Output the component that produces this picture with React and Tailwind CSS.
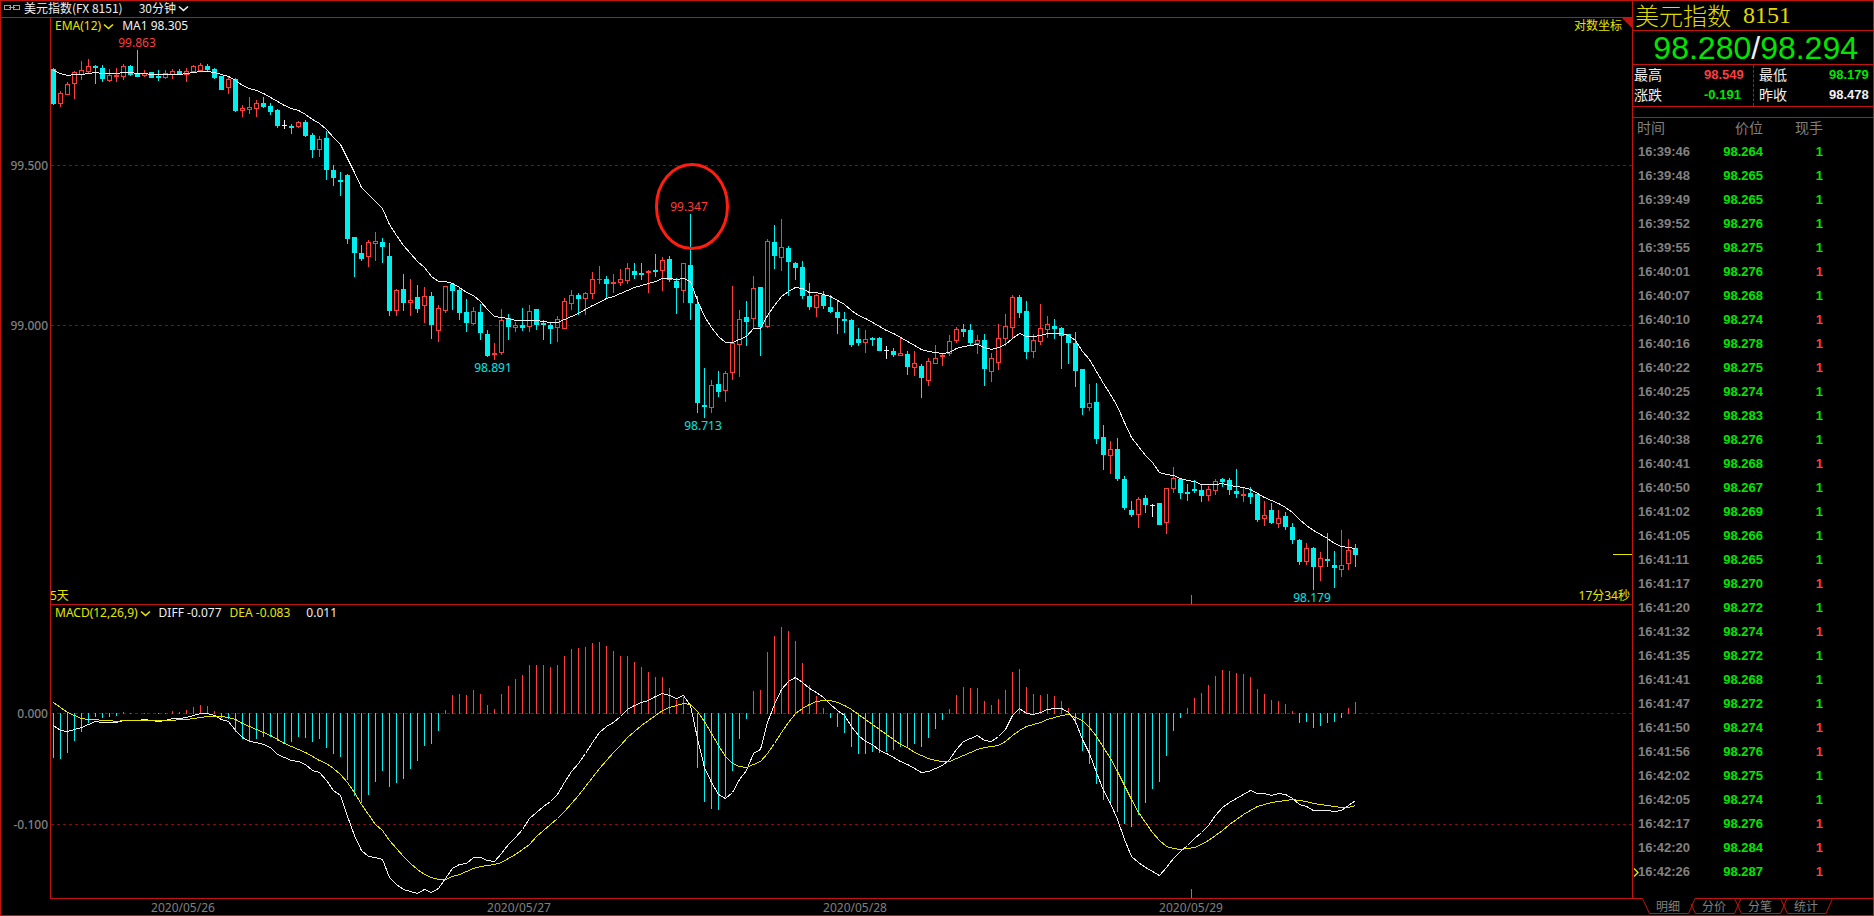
import React from 'react';
import clsx from 'clsx';

const BAR_STEP = 7;
const FIRST_BAR = 53;

// kind, high, body top, body bottom, low (U = up, D = down, F = flat)
const CANDLES = `
D 68 69 104 105|U 91 93 104 107|U 82 84 95 95|U 71 72 84 99|U 61 70 75 80|U 59 66 72 73|D 65 66 68 84|D 65 68 79 82|U 69 75 81 82|U 68 75 77 82
U 64 66 77 80|D 65 66 75 76|D 50 73 77 77|U 70 73 76 77|D 72 72 78 78|D 70 76 78 81|U 70 73 78 79|U 69 71 75 79|D 69 71 75 75|U 68 71 75 82
U 65 66 72 73|U 63 65 71 71|D 64 66 70 71|D 68 69 78 79|D 76 76 90 90|U 77 79 88 94|D 78 79 111 112|U 105 108 111 117|U 97 107 110 114|U 100 103 109 117
D 97 103 107 108|D 103 106 112 115|D 109 110 126 128|F 120 125 126 129|D 124 126 128 134|U 121 122 127 128|D 120 122 136 137|D 133 135 150 158|U 136 139 150 157|D 131 138 170 180
D 165 170 178 186|D 172 180 182 196|D 174 175 239 244|D 237 237 253 277|D 245 253 259 261|U 240 242 257 267|U 232 241 244 261|D 238 242 247 263|D 243 256 311 316|U 289 290 311 316
D 274 289 303 311|U 279 300 303 316|D 285 297 309 313|U 287 296 306 323|D 292 296 325 339|U 305 308 331 342|U 286 286 311 313|D 283 284 291 310|D 288 290 313 320|D 299 312 323 332
U 307 311 324 325|D 304 312 333 340|D 330 334 356 357|U 343 353 355 360|U 309 320 353 355|D 314 318 327 340|U 322 325 328 332|D 308 325 328 331|U 305 311 327 332|D 309 309 325 330
D 320 323 325 340|D 323 325 329 344|U 316 319 328 342|U 298 301 329 329|U 290 295 304 310|D 293 295 299 315|U 292 293 299 315|U 272 279 294 299|U 266 279 280 284|D 276 279 284 298
U 274 282 284 293|U 269 279 283 286|U 263 268 281 284|D 263 271 275 279|D 263 273 275 280|U 270 271 273 293|D 254 270 272 277|U 257 260 271 291|D 256 259 280 282|D 278 281 288 314
U 263 263 291 303|D 214 265 303 320|D 296 304 403 413|D 368 405 407 418|U 380 385 408 413|D 371 384 392 397|U 371 373 391 402|U 286 343 373 380|U 310 319 345 377|D 301 317 322 346
U 276 288 319 328|D 287 287 327 356|U 239 241 327 328|D 225 242 256 269|U 219 247 258 271|D 246 248 262 296|D 262 263 268 280|D 261 267 296 299|D 283 296 307 310|U 294 295 308 317
D 291 295 306 309|D 295 307 312 313|D 300 312 318 334|D 312 319 321 333|D 319 320 345 347|D 328 339 343 346|U 330 339 343 353|D 337 338 340 346|D 337 338 351 351|F 346 350 351 359
D 348 351 355 357|U 337 353 356 356|D 351 354 367 375|U 351 363 368 376|D 364 366 378 398|U 358 361 381 386|U 345 358 364 364|U 353 355 357 366|U 335 341 354 356|U 327 329 341 343
D 324 329 332 337|D 324 330 343 346|U 335 340 344 354|D 334 340 369 386|U 353 358 372 382|U 324 338 363 370|U 314 326 339 346|U 295 297 328 339|D 295 297 313 318|D 301 311 352 359
U 334 340 352 358|U 304 328 342 345|U 316 324 330 338|D 319 326 329 339|D 327 328 336 369|D 334 334 343 364|D 332 343 371 387|D 369 369 408 415|U 384 403 408 411|D 383 402 439 444
D 425 437 455 470|U 441 449 456 474|D 438 449 479 481|D 476 479 508 510|D 501 510 515 517|U 497 499 515 528|D 495 498 505 513|F 504 505 506 517|D 503 503 525 525|U 488 488 523 534
U 467 478 489 493|D 478 479 493 499|D 484 492 494 501|D 480 489 491 493|D 484 490 496 502|U 486 489 496 501|U 479 481 491 495|D 478 479 482 487|D 478 480 490 495|D 469 491 494 498
U 488 494 496 502|D 487 493 497 504|D 493 494 520 522|U 501 515 519 526|D 503 510 523 524|U 510 518 524 528|D 512 516 527 530|D 523 527 540 544|D 539 540 562 565|U 543 548 562 565
D 547 548 567 590|U 552 558 567 581|D 533 559 561 567|D 551 565 568 588|U 530 565 570 577|U 539 550 564 570|D 544 548 555 567`
    .trim()
    .split(/[|\n]/)
    .map((row) => {
        const [kind, ...levels] = row.split(' ');
        return [kind, ...levels.map(Number)];
    });

const EMA = [
    70, 73, 75, 74, 74, 73, 72, 73, 73, 73, 72, 72, 73, 73, 74, 74, 74, 74, 74, 73,
    72, 71, 71, 72, 74, 76, 80, 85, 88, 90, 93, 97, 101, 105, 108, 110, 114, 119, 123, 129,
    137, 144, 158, 172, 187, 194, 201, 208, 224, 235, 245, 253, 261, 267, 276, 281, 281, 283, 287, 292,
    295, 301, 309, 316, 317, 318, 320, 320, 320, 320, 321, 322, 322, 319, 316, 313, 309, 305, 302, 298,
    296, 293, 290, 287, 285, 283, 281, 278, 278, 279, 278, 281, 300, 316, 327, 336, 342, 342, 339, 336,
    328, 328, 315, 305, 296, 291, 287, 288, 292, 292, 294, 296, 300, 304, 310, 315, 318, 322, 326, 330,
    333, 337, 341, 345, 349, 351, 352, 353, 352, 348, 346, 345, 344, 347, 349, 347, 344, 338, 333, 336,
    336, 335, 333, 333, 333, 335, 340, 351, 359, 371, 383, 394, 406, 422, 437, 446, 455, 462, 472, 474,
    475, 478, 480, 481, 484, 484, 484, 483, 485, 486, 487, 489, 493, 497, 500, 503, 507, 512, 519, 525,
    530, 534, 538, 543, 546, 547, 548,
];

// histogram tips, 713 is the zero line and null is an empty slot
const ZERO = 713;
const MACD = [
    758, 759, 753, 741, 732, 723, 717, 718, 717, 716, 712, 713, null, 713, null, 714, 713, 711, 712, 710,
    707, 705, 706, 711, 718, 719, 732, 739, 741, 739, 737, 737, 741, 743, 742, 737, 738, 742, 739, 748,
    754, 757, 780, 796, 803, 795, 782, 771, 787, 783, 779, 769, 761, 746, 744, 731, 710, 695, 694, 695,
    690, 694, 705, 709, 694, 686, 679, 675, 665, 665, 665, 667, 665, 656, 649, 648, 647, 643, 642, 646,
    651, 656, 656, 662, 667, 672, 677, 677, 688, 700, 697, null, 768, 802, 809, 810, 797, 771, 739, 719,
    691, 690, 652, 636, 627, 631, 641, 663, 685, 696, 708, 718, 727, 733, 747, 754, 754, 752, 753, 752,
    750, 747, 747, 744, 747, 738, 729, 720, 709, 695, 687, 688, 688, 701, 705, 699, 690, 672, 669, 687,
    694, 695, 694, 696, 701, 708, 724, 751, 764, 784, 800, 803, 812, 824, 827, 815, 803, 789, 782, 756,
    731, 718, 708, 698, 693, 685, 676, 670, 671, 673, 674, 677, 689, 694, 700, 701, 704, 711, 723, 722,
    728, 726, 723, 722, 718, 708, 702,
];

const DIFF = [
    725, 730, 731, 729, 727, 724, 721, 722, 722, 722, 720, 720, 720, 719, 720, 721, 720, 718, 718, 717,
    715, 713, 713, 715, 719, 721, 730, 737, 741, 742, 744, 747, 754, 757, 760, 761, 764, 770, 772, 780,
    790, 795, 816, 835, 850, 856, 857, 859, 877, 884, 889, 891, 893, 889, 892, 888, 878, 868, 864, 863,
    857, 857, 860, 861, 853, 844, 837, 829, 818, 812, 806, 801, 794, 782, 771, 763, 753, 742, 732, 726,
    722, 716, 709, 705, 702, 700, 696, 693, 695, 698, 695, 705, 738, 767, 782, 794, 798, 792, 779, 770,
    753, 749, 722, 704, 689, 681, 677, 682, 688, 692, 697, 704, 710, 715, 726, 735, 741, 744, 750, 753,
    757, 761, 764, 768, 772, 771, 768, 765, 759, 749, 741, 738, 735, 740, 741, 736, 729, 715, 708, 713,
    714, 712, 709, 708, 708, 712, 721, 739, 753, 772, 790, 803, 819, 839, 856, 862, 867, 871, 875, 867,
    858, 851, 845, 838, 832, 825, 815, 807, 802, 798, 794, 790, 793, 793, 795, 793, 794, 798, 804, 806,
    810, 810, 810, 811, 810, 805, 800,
];

const DEA = [
    702, 707, 712, 715, 718, 719, 719, 720, 720, 721, 720, 720, 720, 720, 720, 720, 720, 720, 719, 719,
    718, 717, 716, 716, 716, 717, 719, 723, 726, 729, 732, 735, 739, 743, 746, 749, 752, 756, 760, 763,
    768, 774, 782, 792, 804, 814, 824, 830, 840, 848, 856, 863, 869, 874, 877, 879, 879, 876, 874, 871,
    868, 866, 865, 864, 862, 858, 854, 849, 844, 836, 830, 824, 818, 811, 803, 795, 786, 777, 768, 760,
    752, 745, 737, 731, 725, 720, 715, 710, 707, 705, 703, 704, 711, 721, 733, 745, 756, 763, 766, 767,
    764, 761, 753, 743, 732, 722, 713, 708, 704, 701, 700, 700, 702, 705, 709, 714, 719, 724, 729, 734,
    739, 744, 747, 752, 755, 758, 760, 761, 761, 758, 755, 752, 749, 747, 746, 745, 741, 735, 730, 726,
    724, 722, 719, 717, 715, 714, 717, 720, 727, 736, 747, 758, 771, 785, 799, 812, 822, 832, 840, 846,
    848, 849, 848, 847, 844, 840, 835, 830, 824, 819, 814, 810, 806, 804, 802, 801, 800, 799, 800, 801,
    803, 804, 805, 806, 807, 807, 805,
];

const EXTREMES = [
    { x: 137, y: 47, label: '99.863', up: true },
    { x: 689, y: 211, label: '99.347', up: true },
    { x: 493, y: 372, label: '98.891' },
    { x: 703, y: 430, label: '98.713' },
    { x: 1312, y: 602, label: '98.179' },
];

const AXIS = [
    { y: 165, label: '99.500' },
    { y: 325, label: '99.000' },
    { y: 713, label: '0.000' },
    { y: 824, label: '-0.100' },
];

const DATES = ['2020/05/26', '2020/05/27', '2020/05/28', '2020/05/29'];

const TICKS = [
    ['16:39:46', '98.264'],
    ['16:39:48', '98.265'],
    ['16:39:49', '98.265'],
    ['16:39:52', '98.276'],
    ['16:39:55', '98.275'],
    ['16:40:01', '98.276', true],
    ['16:40:07', '98.268'],
    ['16:40:10', '98.274', true],
    ['16:40:16', '98.278', true],
    ['16:40:22', '98.275', true],
    ['16:40:25', '98.274'],
    ['16:40:32', '98.283'],
    ['16:40:38', '98.276'],
    ['16:40:41', '98.268', true],
    ['16:40:50', '98.267'],
    ['16:41:02', '98.269'],
    ['16:41:05', '98.266'],
    ['16:41:11', '98.265'],
    ['16:41:17', '98.270', true],
    ['16:41:20', '98.272'],
    ['16:41:32', '98.274', true],
    ['16:41:35', '98.272'],
    ['16:41:41', '98.268'],
    ['16:41:47', '98.272'],
    ['16:41:50', '98.274', true],
    ['16:41:56', '98.276', true],
    ['16:42:02', '98.275'],
    ['16:42:05', '98.274'],
    ['16:42:17', '98.276', true],
    ['16:42:20', '98.284', true],
    ['16:42:26', '98.287', true],
];

const TABS = ['明细', '分价', '分笔', '统计'];

const barX = (i) => FIRST_BAR + i * BAR_STEP;
const toPoints = (series) => series.map((y, i) => `${barX(i) + 0.5},${y + 0.5}`).join(' ');

const Chevron = ({ className }) => (
    <svg width="11" height="7" viewBox="0 0 11 7" className={className} aria-hidden="true">
        <path d="M1 1.5 L5.5 5.5 L10 1.5" fill="none" stroke="currentColor" strokeWidth="1.6" />
    </svg>
);

const GridLine = ({ y }) => (
    <line x1="0" x2="100%" y1={y + 0.5} y2={y + 0.5} stroke="#8c0a0a" strokeDasharray="3 3" />
);

const Candle = ({ x, candle }) => {
    const [kind, high, top, bottom, low] = candle;
    const color = { U: '#ff3c3c', D: '#00f0f0', F: '#f0f0f0' }[kind];
    const hollow = kind === 'U' && bottom - top > 2;
    return (
        <g fill={color}>
            {top > high && <rect x={x} y={high} width="1" height={top - high} />}
            {low > bottom && <rect x={x} y={bottom} width="1" height={low - bottom} />}
            {hollow ? (
                <rect x={x - 1.5} y={top + 0.5} width="4" height={bottom - top - 1} fill="none" stroke={color} />
            ) : (
                <rect x={x - 2} y={top} width="5" height={bottom - top} />
            )}
        </g>
    );
};

const PriceChart = () => (
    <svg
        className="block h-[568px] w-full overflow-visible"
        role="img"
        aria-label="美元指数 30分钟"
        shapeRendering="crispEdges"
    >
        <GridLine y={129} />
        <GridLine y={289} />
        <g transform="translate(-51 -36)">
            {CANDLES.map((candle, i) => (
                <Candle key={i} x={barX(i)} candle={candle} />
            ))}
            <polyline points={toPoints(EMA)} fill="none" stroke="#f0f0f0" />
            {EXTREMES.map(({ x, y, label, up }) => (
                <text key={label} x={x} y={y} textAnchor="middle" fontSize="12" fill={up ? '#ff3c3c' : '#00e6e6'}>
                    {label}
                </text>
            ))}
            <ellipse
                cx="692"
                cy="206.5"
                rx="35.5"
                ry="42"
                fill="none"
                stroke="#ff1e0f"
                strokeWidth="3"
                shapeRendering="geometricPrecision"
            />
            <line x1="1191.5" x2="1191.5" y1="595" y2="604" stroke="#808080" />
        </g>
        <text x="-1" y="564" fontSize="12" fill="#e6e600">
            5天
        </text>
        <text x="100%" dx="-2" y="564" textAnchor="end" fontSize="12" fill="#e6e600">
            17分34秒
        </text>
        <svg x="100%" y="518" overflow="visible">
            <line x1="-19" x2="0" y1="0.5" y2="0.5" stroke="#e6e600" />
        </svg>
    </svg>
);

const MacdChart = () => (
    <svg className="block h-[275px] w-full" role="img" aria-label="MACD" shapeRendering="crispEdges">
        <GridLine y={90} />
        <GridLine y={201} />
        <g transform="translate(-51 -623)">
            {MACD.map((tip, i) => {
                if (tip === null) return null;
                return tip > ZERO ? (
                    <rect key={i} x={barX(i)} y={ZERO} width="1" height={tip - ZERO} fill="#00f0f0" />
                ) : (
                    <rect key={i} x={barX(i)} y={tip} width="1" height={ZERO + 1 - tip} fill="#ff3c3c" />
                );
            })}
            <polyline points={toPoints(DIFF)} fill="none" stroke="#f0f0f0" />
            <polyline points={toPoints(DEA)} fill="none" stroke="#e6e600" />
            <line x1="1191.5" x2="1191.5" y1="889" y2="898" stroke="#808080" />
        </g>
    </svg>
);

const TitleBar = () => (
    <header className="flex h-[17px] items-center border-b border-[#c0140c] pb-[2px] pl-[3px] font-['Noto_Sans_CJK_SC',sans-serif] text-xs leading-4 text-[#f0f0f0]">
        <svg width="16" height="6" viewBox="0 0 16 6" className="mr-1" shapeRendering="crispEdges" aria-hidden="true">
            <path d="M6.5 2 V0.5 H0.5 V4.5 H6.5 V3 M9.5 2 V0.5 H15.5 V4.5 H9.5 V3 M5 2.5 H11" fill="none" stroke="#a0a0a0" />
        </svg>
        <h1 className="mr-4">美元指数(FX 8151)</h1>
        <button type="button" className="flex items-center gap-[2px]">
            30分钟
            <Chevron />
        </button>
    </header>
);

const Stat = ({ label, value, className }) => (
    <div className="flex h-5 items-start">
        <dt className="w-[70px] text-sm leading-[18px] text-[#f0f0f0]">{label}</dt>
        <dd className={clsx("font-['Liberation_Sans',sans-serif] text-[13px] leading-5 font-bold", className)}>
            {value}
        </dd>
    </div>
);

const QuotePanel = () => (
    <aside className="w-[241px] shrink-0 border-l border-[#c0140c] font-['Noto_Sans_CJK_SC',sans-serif]">
        <h2 className="flex h-[30px] items-center gap-3 border-b border-[#c0140c] pb-[2px] pl-[2px] text-2xl leading-7 font-light text-[#e0dc00]">
            <span>美元指数</span>
            <span className="font-['Liberation_Serif',serif]">8151</span>
        </h2>
        <p className="h-[34px] border-b border-[#c0140c] pr-[15px] text-right font-['Liberation_Sans',sans-serif] text-[32px] leading-[34px] text-[#00e600]">
            98.280<span className="text-[#f0f0f0]">/</span>98.294
        </p>
        <div className="flex h-[42px] border-b border-[#c0140c]">
            <dl className="w-[120px] pl-px">
                <Stat label="最高" value="98.549" className="text-[#ff3c3c]" />
                <Stat label="涨跌" value="-0.191" className="text-[#00e600]" />
            </dl>
            <dl className="flex-1 border-l border-dashed border-[#c0140c] pl-[5px]">
                <Stat label="最低" value="98.179" className="text-[#00e600]" />
                <Stat label="昨收" value="98.478" className="text-[#f0f0f0]" />
            </dl>
        </div>
        <div className="h-[11px] border-b border-[#c0140c]" />
        <table className="w-full table-fixed font-['Liberation_Sans',sans-serif] text-[13px] leading-6 font-bold">
            <thead className="font-['Noto_Sans_CJK_SC',sans-serif] text-sm text-[#808080]">
                <tr className="h-[22px] leading-[18px] *:p-0 *:align-top *:font-normal">
                    <th className="w-[70px] text-left">
                        <span className="pl-1">时间</span>
                    </th>
                    <th className="w-[60px] text-right">价位</th>
                    <th className="w-[60px] text-right">现手</th>
                    <th />
                </tr>
            </thead>
            <tbody>
                {TICKS.map(([time, price, up], i) => (
                    <tr key={time} className="*:p-0">
                        <td className="relative text-[#808080]">
                            {i === TICKS.length - 1 && (
                                <svg width="6" height="9" viewBox="0 0 6 9" className="absolute top-2 left-0" aria-hidden="true">
                                    <path d="M1 0.5 L5 4.5 L1 8.5" fill="none" stroke="#e6e600" strokeWidth="1.4" />
                                </svg>
                            )}
                            <span className="pl-[5px]">{time}</span>
                        </td>
                        <td className="text-right text-[#00e600]">{price}</td>
                        <td className={clsx('text-right', up ? 'text-[#ff3c3c]' : 'text-[#00e600]')}>1</td>
                        <td />
                    </tr>
                ))}
            </tbody>
        </table>
    </aside>
);

const DetailTabs = () => (
    <nav className="relative -mt-px w-[240px] shrink-0">
        <svg className="absolute inset-0 h-[17px] w-full" aria-hidden="true">
            <g fill="none" stroke="#c0140c">
                <path d="M0 0.5 H9.5 L16.5 15.5 H55.5 L62 0.5 H240" />
                <path d="M58 6 L62.5 15.5 H101.5 L108 0.5" />
                <path d="M101.5 0.5 L108.5 15.5 H147.5 L154 0.5" />
                <path d="M147.5 0.5 L154.5 15.5 H193 L199.5 0.5" />
            </g>
        </svg>
        <div className="relative flex pl-3 font-['Noto_Sans_CJK_SC',sans-serif] text-xs leading-4 text-[#808080]">
            {TABS.map((tab) => (
                <button key={tab} type="button" className="w-[46px]">
                    {tab}
                </button>
            ))}
        </div>
    </nav>
);

const App = () => {
    return (
        <div className="flex min-h-screen flex-col border border-[#c0140c] bg-black font-['Noto_Sans','Noto_Sans_CJK_SC',sans-serif] text-xs">
            <div className="flex flex-1">
                <main className="flex min-w-0 flex-1 flex-col">
                    <TitleBar />
                    <div className="flex flex-1">
                        <svg className="w-[49px] shrink-0" aria-hidden="true">
                            {AXIS.map(({ y, label }) => (
                                <text key={label} x="47" y={y - 13} textAnchor="end" fontSize="12" fontWeight="500" fill="#808080">
                                    {label}
                                </text>
                            ))}
                        </svg>
                        <div className="min-w-0 flex-1 border-b border-l border-[#c0140c]">
                            <section className="border-b border-[#c0140c]">
                                <div className="flex h-[18px] items-center pb-[2px] pl-1 leading-4">
                                    <button type="button" className="flex items-center gap-[2px] text-[#e6e600]">
                                        EMA(12)
                                        <Chevron />
                                    </button>
                                    <span className="ml-2 text-[#f0f0f0]">MA1 98.305</span>
                                    <button type="button" className="ml-auto text-[#e6e600]">
                                        对数坐标
                                    </button>
                                    <svg width="10" height="10" className="self-start" aria-hidden="true">
                                        <path d="M0 0 H10 V10 Z" fill="#c0140c" />
                                    </svg>
                                </div>
                                <PriceChart />
                            </section>
                            <section>
                                <div className="flex h-[18px] items-center pb-[2px] pl-1 leading-4">
                                    <button type="button" className="flex items-center gap-[2px] text-[#e6e600]">
                                        MACD(12,26,9)
                                        <Chevron />
                                    </button>
                                    <span className="ml-2 text-[#f0f0f0]">DIFF -0.077</span>
                                    <span className="ml-2 text-[#e6e600]">DEA -0.083</span>
                                    <span className="ml-4 text-[#f0f0f0]">0.011</span>
                                </div>
                                <MacdChart />
                            </section>
                        </div>
                    </div>
                </main>
                <QuotePanel />
            </div>
            <footer className="flex h-4">
                <div className="flex min-w-0 flex-1 pt-px pl-[14px] leading-4 text-[#808080]">
                    {DATES.map((date) => (
                        <time key={date} className="w-[336px] text-center">
                            {date}
                        </time>
                    ))}
                </div>
                <DetailTabs />
            </footer>
        </div>
    );
};

export default App;
